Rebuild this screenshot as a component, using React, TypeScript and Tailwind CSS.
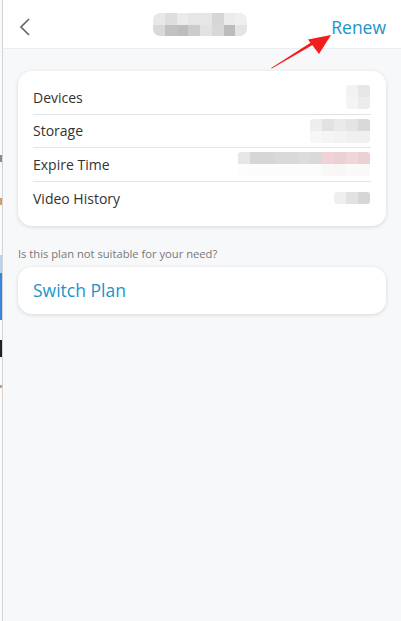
// blurred (mosaic) placeholders for the redacted values
type Mosaic = string[][];

const titleMosaic: Mosaic = [
  ["#e8e8e8", "#dedede", "#ebebeb", "#e6e6e6", "#e6e6e6", "#d6d6d6", "#ebebeb", "#efefef"],
  ["#d9d9d9", "#c2c2c2", "#bdbdbd", "#cccccc", "#e2e2e2", "#d8d8d8", "#bcbcbc", "#e4e4e4"],
];

interface Row {
  label: string;
  cells: Mosaic;
}

const rows: Row[] = [
  {
    label: "Devices",
    cells: [
      ["#f2f2f2", "#e6e6e6"],
      ["#f4f4f4", "#ececec"],
    ],
  },
  {
    label: "Storage",
    cells: [
      ["#eeeeee", "#e2e2e2", "#eaeaea", "#e4e4e4", "#d9d9d9"],
      ["#f7f7f7", "#f5f5f5", "#f3f3f3", "#f0f0f0", "#f0f0f0"],
    ],
  },
  {
    label: "Expire Time",
    cells: [
      ["#e6e6e6", "#d6d6d6", "#d6d6d6", "#d9d9d9", "#d9d9d9", "#dcdcdc", "#d9d9d9", "#efd3d6", "#ecd0d3", "#efd6d8", "#eccfd2"],
      ["#fdfdfd", "#fcfcfc", "#fcfcfc", "#fcfcfc", "#fcfcfc", "#fcfcfc", "#fcfcfc", "#faf8f6", "#f9f7f5", "#fafafa", "#f9f9f9"],
    ],
  },
  {
    label: "Video History",
    cells: [["#efefef", "#e2e2e2", "#d6d6d6"]],
  },
];

function Blur({ cells, size = 12, rowH = 12 }: { cells: Mosaic; size?: number; rowH?: number }) {
  return (
    <div className="flex flex-col overflow-hidden rounded-[3px]">
      {cells.map((r, i) => (
        <div key={i} className="flex">
          {r.map((c, j) => (
            <div key={j} style={{ background: c, width: size, height: rowH }} />
          ))}
        </div>
      ))}
    </div>
  );
}

export default function App() {
  return (
    <div
      className="relative flex w-[401px] h-[621px] overflow-hidden bg-[#f7f8fa]"
      style={{ fontFamily: '"Open Sans", "Noto Sans", sans-serif' }}
    >
      {/* edge of the window behind */}
      <div className="flex flex-col w-[2px] bg-[#fafafa]">
        <div className="h-[155px]" />
        <div className="h-[7px] bg-[#8a8a8a]" />
        <div className="h-[36px]" />
        <div className="h-[7px] bg-[#c9a070]" />
        <div className="h-[50px]" />
        <div className="h-[18px] bg-[#b9d2f0]" />
        <div className="h-[47px] bg-[#3b82d9]" />
        <div className="h-[20px]" />
        <div className="h-[17px] bg-[#222]" />
        <div className="h-[28px]" />
        <div className="h-[3px] bg-[#c9a070]" />
      </div>
      <div className="w-px bg-[#d4d4d4]" />

      <div className="flex-1 flex flex-col">
        {/* header */}
        <div className="relative h-[49px] bg-white border-b border-[#ededed] flex items-center justify-between pl-[16px] pr-[15px]">
          <svg width="12" height="18" viewBox="0 0 12 18" className="mt-[5px]">
            <polyline points="10,1 2,9 10,17" fill="none" stroke="#666" strokeWidth="1.7" />
          </svg>
          <div className="absolute left-[150px] top-[13px]">
            <div className="rounded-[7px] overflow-hidden">
              <Blur cells={titleMosaic} size={11.75} rowH={11.5} />
            </div>
          </div>
          <span className="text-[17.5px] text-[#1b95c9] leading-none mt-[7px]">Renew</span>
        </div>

        <div className="px-[15px] pt-[22px]">
          <div className="bg-white rounded-[14px] shadow-[0_1px_4px_rgba(0,0,0,0.13)] px-[15px] pt-[10px] pb-[11px]">
            {rows.map((r, i) => (
              <div
                key={r.label}
                className={`h-[33.5px] flex items-center justify-between pr-px ${
                  i < rows.length - 1 ? "border-b border-[#e4e4e4]" : ""
                }`}
              >
                <span className="text-[14px] text-[#333]">{r.label}</span>
                <Blur cells={r.cells} />
              </div>
            ))}
          </div>

          <p className="mt-[20px] text-[11.2px] leading-[16px] text-[#777]">
            Is this plan not suitable for your need?
          </p>

          <div className="mt-[5px] h-[47px] bg-white rounded-[14px] shadow-[0_1px_4px_rgba(0,0,0,0.13)] flex items-center px-[15px]">
            <span className="text-[17.5px] text-[#1b95c9]">Switch Plan</span>
          </div>
        </div>
      </div>

      {/* red annotation arrow */}
      <svg className="absolute left-0 top-0 pointer-events-none" width="401" height="80" viewBox="0 0 401 80">
        <polygon points="271,69 316,43 314,40.5 272,67.5" fill="#f21d1d" />
        <polygon points="331,35 308,39.5 319,54" fill="#f21d1d" />
      </svg>
    </div>
  );
}
